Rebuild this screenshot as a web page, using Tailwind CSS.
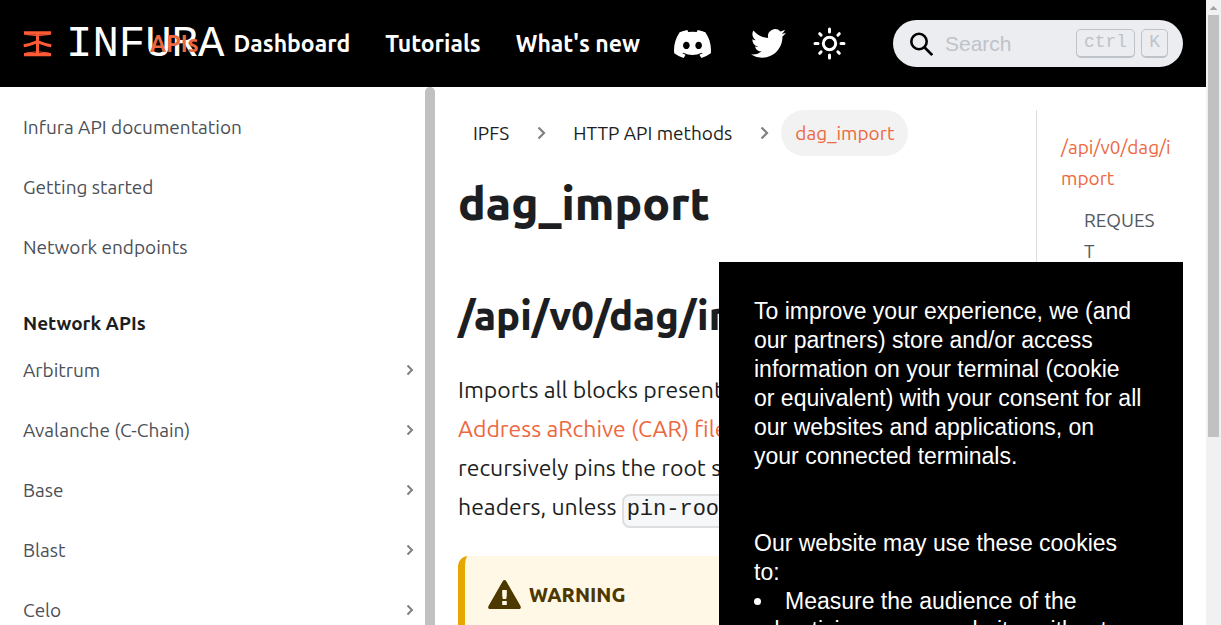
<!DOCTYPE html>
<html lang="en">
<head>
<meta charset="utf-8">
<meta name="viewport" content="width=device-width, initial-scale=1">
<title>dag_import | INFURA</title>
<script src="https://cdn.jsdelivr.net/npm/@tailwindcss/browser@4"></script>
</head>
<body class="relative flex h-screen overflow-hidden bg-white font-['Ubuntu','Noto_Sans',sans-serif] text-[#1c1e21]">

<div class="flex min-w-0 flex-1 flex-col">
  <header class="flex h-[87px] shrink-0 items-center bg-black pr-[23px] pl-[23px] text-white">
    <a href="#" aria-label="Infura home" class="flex w-[127px] shrink-0 items-center gap-[14px] whitespace-nowrap">
      <svg class="h-[26px] w-[29px] shrink-0" viewBox="0 0 29 26" fill="none" stroke="#ff5a36" stroke-width="3">
        <path d="M1 2h27M1 23.600h27" stroke-width="3.400" />
        <path d="M14.500 2v21" />
        <path d="M.7 14.800C5 14.200 10 12.500 14.500 10.600C19 12.500 24 14.200 28.300 14.800" />
        <path d="M3 3.500Q14.500 6 26 3.500M3 22Q14.500 19.500 26 22" stroke-width="1" />
      </svg>
      <span class="font-['Liberation_Mono',monospace] text-[44px] leading-none">INFURA</span>
    </a>
    <nav class="z-10 flex flex-1 items-center gap-[35px] pt-px text-[23px] font-semibold whitespace-nowrap">
      <a href="#" class="text-[#ec6840]">APIs</a>
      <a href="#">Dashboard</a>
      <a href="#">Tutorials</a>
      <a href="#">What's new</a>
    </nav>
    <div class="flex shrink-0 items-center">
      <a href="#" aria-label="Discord" class="mr-[40px]">
        <svg class="h-[28px] w-[37px]" viewBox="0 0 127.140 96.360" fill="#fff"><path d="M107.700 8.070A105.150 105.150 0 0 0 81.470 0a72.060 72.060 0 0 0-3.360 6.830 97.680 97.680 0 0 0-29.110 0A72.370 72.370 0 0 0 45.640 0a105.890 105.890 0 0 0-26.250 8.090C2.790 32.650-1.710 56.600.54 80.210a105.730 105.730 0 0 0 32.170 16.150 77.700 77.700 0 0 0 6.890-11.110 68.420 68.420 0 0 1-10.850-5.180c.91-.66 1.800-1.340 2.660-2a75.570 75.570 0 0 0 64.320 0c.87.71 1.760 1.390 2.660 2a68.680 68.680 0 0 1-10.870 5.190 77 77 0 0 0 6.890 11.100 105.250 105.250 0 0 0 32.190-16.140c2.640-27.380-4.510-51.110-18.900-72.150ZM42.450 65.690C36.180 65.690 31 60 31 53s5-12.740 11.430-12.740S54 46 53.890 53s-5.050 12.690-11.440 12.690Zm42.240 0C78.410 65.690 73.250 60 73.250 53s5-12.740 11.440-12.740S96.230 46 96.120 53s-5.040 12.690-11.430 12.690Z"/></svg>
      </a>
      <a href="#" aria-label="Twitter" class="mr-[27px]">
        <svg class="h-[35px] w-[35px]" viewBox="0 0 24 24" fill="#fff"><path d="M23.950 4.570a10 10 0 0 1-2.820.770 4.960 4.960 0 0 0 2.160-2.720c-.950.550-2 .950-3.130 1.180a4.920 4.920 0 0 0-8.380 4.480C7.690 8.090 4.070 6.130 1.640 3.160a4.920 4.920 0 0 0 1.520 6.570 4.900 4.900 0 0 1-2.230-.610v.060a4.920 4.920 0 0 0 3.950 4.830 5 5 0 0 1-2.210.080 4.940 4.940 0 0 0 4.600 3.420A9.870 9.870 0 0 1 0 19.540a13.990 13.990 0 0 0 7.550 2.210c9.050 0 14-7.500 14-13.980 0-.210 0-.420-.020-.630a9.940 9.940 0 0 0 2.460-2.550z"/></svg>
      </a>
      <button type="button" aria-label="Switch between dark and light mode" class="mr-[47px]">
        <svg class="block h-[33px] w-[33px]" viewBox="0 0 33 33" fill="none" stroke="#fff" stroke-width="3" stroke-linecap="round"><circle cx="16.500" cy="16.500" r="6.200"/><path d="M16.500 2v3M16.500 28v3M2 16.500h3M28 16.500h3M6.700 6.700l1.400 1.400M24.900 24.900l1.400 1.400M6.700 26.300l1.400-1.400M24.900 8.100l1.400-1.400"/></svg>
      </button>
      <div class="flex h-[47px] w-[290px] items-center rounded-full bg-[#ebedf0] pr-[15px] pl-4">
        <svg class="h-6 w-6 shrink-0" viewBox="0 0 24 24" fill="none" stroke="#000" stroke-width="2.600"><circle cx="10" cy="9.500" r="7.700"/><path d="M15.200 15l8 8"/></svg>
        <input type="search" aria-label="Search" placeholder="Search" class="ml-3 min-w-0 flex-1 bg-transparent font-['Liberation_Sans',sans-serif] text-[21px] outline-none placeholder:text-[#bec3c9]">
        <span class="flex gap-[6px] font-['Liberation_Mono',monospace] text-[18px] leading-6 text-[#bec3c9]">
          <kbd class="rounded-[5px] border border-b-2 border-[#bec3c9] px-[7px] pb-[2px] font-[inherit]">ctrl</kbd>
          <kbd class="rounded-[5px] border border-b-2 border-[#bec3c9] px-[7px] pb-[2px] font-[inherit]">K</kbd>
        </span>
      </div>
    </div>
  </header>

  <div class="flex min-h-0 flex-1">
    <aside class="flex w-[435px] shrink-0 overflow-hidden">
      <nav class="flex-1 pt-[22px] pr-[10px] pl-[23px] text-[19px] leading-9 text-[#4b5058]">
        <ul class="flex flex-col gap-6">
          <li><a href="#" class="block">Infura API documentation</a></li>
          <li><a href="#" class="block">Getting started</a></li>
          <li><a href="#" class="block">Network endpoints</a></li>
        </ul>
        <h2 class="mt-[40px] mb-[11px] font-semibold text-[#1c1e21]">Network APIs</h2>
        <ul class="flex flex-col gap-6">
          <li><a href="#" class="flex items-center justify-between">Arbitrum<svg class="h-3 w-[10px]" viewBox="0 0 10 12" fill="none" stroke="#808080" stroke-width="2"><path d="M2.500 1.500L7 6 2.500 10.500"/></svg></a></li>
          <li><a href="#" class="flex items-center justify-between">Avalanche (C-Chain)<svg class="h-3 w-[10px]" viewBox="0 0 10 12" fill="none" stroke="#808080" stroke-width="2"><path d="M2.500 1.500L7 6 2.500 10.500"/></svg></a></li>
          <li><a href="#" class="flex items-center justify-between">Base<svg class="h-3 w-[10px]" viewBox="0 0 10 12" fill="none" stroke="#808080" stroke-width="2"><path d="M2.500 1.500L7 6 2.500 10.500"/></svg></a></li>
          <li><a href="#" class="flex items-center justify-between">Blast<svg class="h-3 w-[10px]" viewBox="0 0 10 12" fill="none" stroke="#808080" stroke-width="2"><path d="M2.500 1.500L7 6 2.500 10.500"/></svg></a></li>
          <li><a href="#" class="flex items-center justify-between">Celo<svg class="h-3 w-[10px]" viewBox="0 0 10 12" fill="none" stroke="#808080" stroke-width="2"><path d="M2.500 1.500L7 6 2.500 10.500"/></svg></a></li>
        </ul>
      </nav>
      <div class="w-[10px] shrink-0 rounded-t-full bg-[#c1c1c1]"></div>
    </aside>

    <main class="flex min-w-0 flex-1 overflow-hidden pt-[23px] pr-[23px] pl-[23px]">
      <article class="min-w-0 flex-1 pr-[23px]">
        <nav aria-label="Breadcrumbs" class="flex h-[46px] items-center text-[19px] leading-6 whitespace-nowrap">
          <a href="#" class="px-[15px]">IPFS</a>
          <svg class="mx-3 h-[14px] w-[10px]" viewBox="0 0 10 14" fill="none" stroke="#808080" stroke-width="2.200"><path d="M2.500 1.500L8 7 2.500 12.500"/></svg>
          <a href="#" class="px-[15px]">HTTP API methods</a>
          <svg class="mx-3 h-[14px] w-[10px]" viewBox="0 0 10 14" fill="none" stroke="#808080" stroke-width="2.200"><path d="M2.500 1.500L8 7 2.500 12.500"/></svg>
          <span class="flex h-full items-center rounded-full bg-[#f2f2f2] px-[14px] text-[#ec6840]">dag_import</span>
        </nav>
        <h1 class="mt-[17px] text-[46px] leading-[60px] font-extrabold">dag_import</h1>
        <h2 class="mt-[57px] text-[40px] leading-[52px] font-extrabold whitespace-nowrap">/api/v0/dag/import</h2>
        <p class="mt-[28px] text-[23px] leading-[39px] font-[450]">Imports all blocks present in a <a href="#" class="text-[#ec6840]">Content<br>Address aRchive (CAR) file</a> and<br>recursively pins the root specified in<br>headers, unless <code class="rounded-lg border-2 border-[#dcdee0] bg-[#f6f7f8] px-[3px] pt-px pb-1 align-middle font-['Liberation_Mono',monospace] text-[22px]">pin-roots</code></p>
        <div class="mt-[27px] rounded-[10px] border-l-[7px] border-[#e6a700] bg-[#fff8e6] px-[23px] py-[23px] text-[#4d3800]">
          <h5 class="flex items-center gap-2 text-[20px] leading-8 font-extrabold"><svg class="h-[29px] w-[33px]" viewBox="0 0 33 29" fill="#4d3800"><path fill-rule="evenodd" d="M16.500 0Q17.600 0 18.300 1.300L32.500 26Q33.500 28.800 31.500 29H1.500Q-.5 28.800.5 26L14.700 1.300Q15.400 0 16.500 0ZM14.200 10v5.500l.6 3.500h3.400l.6-3.500V10ZM14.200 21v4h4.600v-4Z"/></svg>WARNING</h5>
        </div>
      </article>
      <aside class="w-[147px] shrink-0 border-l border-[#dadde1] pt-[22px] pr-[10px] pl-6 text-[19px] leading-[31px] break-all text-[#525860]">
        <ul class="flex flex-col gap-[11px]">
          <li><a href="#" class="block text-[#ec6840]">/api/v0/dag/import</a></li>
          <li class="pr-3 pl-[23px]"><a href="#" class="block">REQUEST</a></li>
        </ul>
      </aside>
    </main>
  </div>
</div>

<div class="flex w-[15px] shrink-0 flex-col items-center bg-[#f1f1f1]">
  <svg class="h-[15px] w-[15px] shrink-0" viewBox="0 0 15 15" fill="#a3a3a3"><path d="M7.500 6l4 4h-8z"/></svg>
  <div class="h-[422px] w-[11px] bg-[#c1c1c1]"></div>
</div>

<section aria-label="Cookie consent" class="absolute top-[262px] right-[38px] bottom-0 z-20 w-[464px] overflow-hidden bg-black pt-[35px] pr-[39px] pl-[35px] font-['Liberation_Sans',sans-serif] text-[23px] leading-[29px] text-white">
  <p>To improve your experience, we (and our partners) store and/or access information on your terminal (cookie or equivalent) with your consent for all our websites and applications, on your connected terminals.</p>
  <p class="mt-[58px]">Our website may use these cookies to:</p>
  <ul class="list-inside list-disc">
    <li>Measure the audience of the advertising on our website, without profiling</li>
  </ul>
</section>
</body>
</html>
